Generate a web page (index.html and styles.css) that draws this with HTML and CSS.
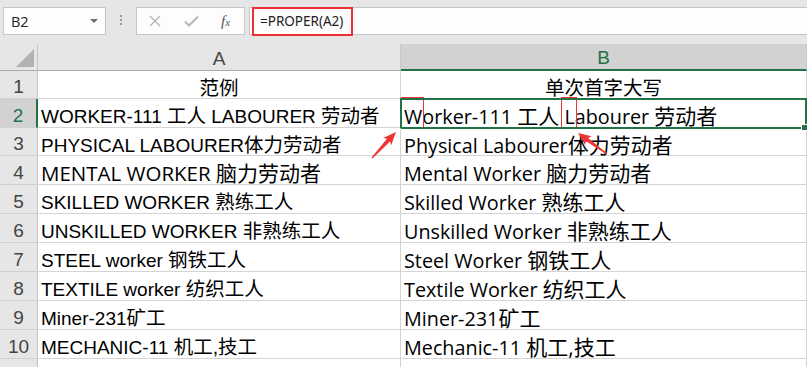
FILE: index.html
```html
<!DOCTYPE html>
<html>
<head>
  <title>PROPER</title>
  <link rel="stylesheet" href="styles.css">
</head>
<body>
  <div class="window">
    <!-- name box + formula bar -->
    <div class="formula-row">
      <div class="name-box">
        <span class="cell-ref">B2</span>
        <span class="caret"></span>
      </div>
      <div class="grip"><i></i><i></i><i></i></div>
      <div class="fx-box">
        <svg class="tool-icon" width="12" height="12" viewBox="0 0 12 12">
          <path d="M1 1 L11 11 M11 1 L1 11" stroke="#b5b5b5" stroke-width="1.4" fill="none"/>
        </svg>
        <svg class="tool-icon" width="15" height="12" viewBox="0 0 15 12">
          <path d="M1 6.5 L5 10.5 L14 1.5" stroke="#b5b5b5" stroke-width="2" fill="none"/>
        </svg>
        <span class="fx">f<span class="fx-x">x</span></span>
      </div>
      <div class="formula-input">
        <span class="formula-text">=PROPER(A2)</span>
      </div>
    </div>

    <!-- worksheet -->
    <div class="sheet">
      <div class="corner"><span class="corner-tri"></span></div>
      <div class="col-head">A</div>
      <div class="col-head active">B</div>

      <div class="row-head">1</div>
      <div class="cell center"><span class="zh">范例</span></div>
      <div class="cell center"><span class="zh">单次首字大写</span></div>

      <div class="row-head active">2</div>
      <div class="cell">WORKER-111 <span class="zh">工人</span> LABOURER <span class="zh">劳动者</span></div>
      <div class="cell alt selected"><span class="mark">W</span>orker-111 <span class="zh">工人</span> <span class="mark">L</span>abourer <span class="zh">劳动者</span></div>

      <div class="row-head">3</div>
      <div class="cell">PHYSICAL LABOURER<span class="zh">体力劳动者</span></div>
      <div class="cell alt">Physical Labourer<span class="zh">体力劳动者</span></div>

      <div class="row-head">4</div>
      <div class="cell alt caps">MENTAL WORKER <span class="zh">脑力劳动者</span></div>
      <div class="cell alt">Mental Worker <span class="zh">脑力劳动者</span></div>

      <div class="row-head">5</div>
      <div class="cell">SKILLED WORKER <span class="zh">熟练工人</span></div>
      <div class="cell alt">Skilled Worker <span class="zh">熟练工人</span></div>

      <div class="row-head">6</div>
      <div class="cell">UNSKILLED WORKER <span class="zh">非熟练工人</span></div>
      <div class="cell alt">Unskilled Worker <span class="zh">非熟练工人</span></div>

      <div class="row-head">7</div>
      <div class="cell">STEEL worker <span class="zh">钢铁工人</span></div>
      <div class="cell alt">Steel Worker <span class="zh">钢铁工人</span></div>

      <div class="row-head">8</div>
      <div class="cell">TEXTILE worker <span class="zh">纺织工人</span></div>
      <div class="cell alt">Textile Worker <span class="zh">纺织工人</span></div>

      <div class="row-head">9</div>
      <div class="cell">Miner-231<span class="zh">矿工</span></div>
      <div class="cell alt">Miner-231<span class="zh">矿工</span></div>

      <div class="row-head">10</div>
      <div class="cell">MECHANIC-11 <span class="zh">机工,技工</span></div>
      <div class="cell alt">Mechanic-11 <span class="zh">机工,技工</span></div>

      <div class="row-head"></div>
      <div class="cell"></div>
      <div class="cell"></div>
    </div>

    <!-- red annotation arrows -->
    <svg class="arrows" width="807" height="367" viewBox="0 0 807 367">
      <polygon fill="#ee3535" points="372.5,158.5 390.0,141.5 391.2,145.3 396,132 383.2,137.9 387.0,138.7 371.5,157.5"/>
      <polygon fill="#ee3535" points="607.4,153.4 588.1,137.9 591.7,136.2 578,133 585.3,145.2 585.7,141.1 606.6,154.6"/>
    </svg>
  </div>
</body>
</html>
```

FILE: styles.css
```css
body {
  margin: 0;
  background-color: #ffffff;
  overflow: hidden;
}

.window {
  position: relative;
  width: 807px;
  height: 367px;
  overflow: hidden;
  font-family: "Liberation Sans", "Noto Sans CJK SC", sans-serif;
}

/* formula bar */
.formula-row {
  display: flex;
  align-items: flex-start;
  height: 44px;
  padding-top: 7px;
  box-sizing: border-box;
  background-color: #e6e6e6;
}

.name-box {
  display: flex;
  align-items: center;
  justify-content: space-between;
  width: 103px;
  height: 28px;
  margin-left: 3px;
  padding: 0 7px 0 7px;
  box-sizing: border-box;
  background-color: #fdfdfd;
  border: 1px solid #c6c6c6;
}

.cell-ref {
  font-family: "Open Sans", sans-serif;
  font-size: 14.5px;
  color: #222;
}

.caret {
  width: 0;
  height: 0;
  border-left: 4px solid transparent;
  border-right: 4px solid transparent;
  border-top: 4px solid #6f6f6f;
}

.grip {
  display: flex;
  flex-direction: column;
  align-items: center;
  gap: 2px;
  width: 30px;
  padding-top: 8px;
}

.grip i {
  display: block;
  width: 2px;
  height: 2px;
  background-color: #9a9a9a;
}

.fx-box {
  display: flex;
  align-items: center;
  width: 109px;
  height: 28px;
  padding-left: 12px;
  box-sizing: border-box;
  background-color: #fdfdfd;
  border: 1px solid #c6c6c6;
}

.tool-icon {
  margin-right: 23px;
}

.fx {
  font-family: "Liberation Serif", serif;
  font-style: italic;
  font-size: 15px;
  color: #555;
  margin-left: -1px;
}

.fx-x {
  font-size: 11px;
}

.formula-input {
  flex: 1;
  height: 28px;
  margin-left: 4px;
  padding-left: 2px;
  box-sizing: border-box;
  background-color: #fdfdfd;
  border: 1px solid #c6c6c6;
  border-right: none;
}

.formula-text {
  display: inline-block;
  height: 29px;
  margin-top: -1px;
  padding: 0 8px 0 6px;
  box-sizing: border-box;
  border: 2px solid #ee3030;
  font-family: "Noto Sans", sans-serif;
  font-size: 13.5px;
  line-height: 24px;
  color: #222;
}

/* worksheet grid */
.sheet {
  display: grid;
  grid-template-columns: 38px 363px 406px;
  grid-template-rows: 27px 28px 29px 28px 29px 29px 29px 29px 29px 29px 29px 29px;
}

.corner,
.col-head,
.row-head {
  box-sizing: border-box;
  background-color: #e6e6e6;
  color: #444;
  font-size: 19px;
}

.corner {
  position: relative;
  border-right: 1px solid #c4c4c4;
  border-bottom: 1px solid #ababab;
}

.corner-tri {
  position: absolute;
  right: 3px;
  bottom: 3px;
  width: 0;
  height: 0;
  border-left: 18px solid transparent;
  border-bottom: 18px solid #b2b2b2;
}

.col-head {
  display: flex;
  align-items: center;
  justify-content: center;
  padding-top: 3px;
  border-right: 1px solid #c8c8c8;
  border-bottom: 1px solid #ababab;
}

.col-head.active {
  background-color: #d2d2d2;
  color: #217346;
  border-bottom: 2px solid #217346;
}

.row-head {
  display: flex;
  align-items: center;
  justify-content: center;
  padding-top: 5px;
  border-right: 1px solid #c4c4c4;
  border-bottom: 1px solid #d0d0d0;
}

.row-head.active {
  background-color: #d2d2d2;
  color: #217346;
  border-right: 2px solid #217346;
}

.cell {
  position: relative;
  box-sizing: border-box;
  padding-left: 3px;
  padding-top: 3px;
  border-right: 1px solid #d4d4d4;
  border-bottom: 1px solid #d4d4d4;
  font-size: 19px;
  line-height: 28px;
  color: #000;
  white-space: nowrap;
}

.cell .zh {
  font-size: 19.5px;
}

.cell.center {
  text-align: center;
  padding-left: 0;
}

.cell.alt {
  font-family: "Open Sans", "Noto Sans CJK SC", sans-serif;
  font-size: 19.8px;
}

.cell.alt .zh {
  font-size: 21px;
}

.cell.alt.caps {
  font-size: 20.5px;
}

/* active cell outline and fill handle */
.cell.selected::after {
  content: "";
  position: absolute;
  left: -1px;
  top: -1px;
  right: -1px;
  bottom: -2px;
  border: 2px solid #217346;
  pointer-events: none;
}

.cell.selected::before {
  content: "";
  position: absolute;
  right: -2px;
  bottom: -4px;
  width: 5px;
  height: 5px;
  background-color: #217346;
  border: 1px solid #fff;
  z-index: 2;
}

.mark {
  position: relative;
}

.mark::after {
  content: "";
  position: absolute;
  left: -3px;
  right: -2px;
  top: -6px;
  bottom: 1px;
  border: 1px solid #ee3333;
}

.arrows {
  position: absolute;
  left: 0;
  top: 0;
  pointer-events: none;
}
```
